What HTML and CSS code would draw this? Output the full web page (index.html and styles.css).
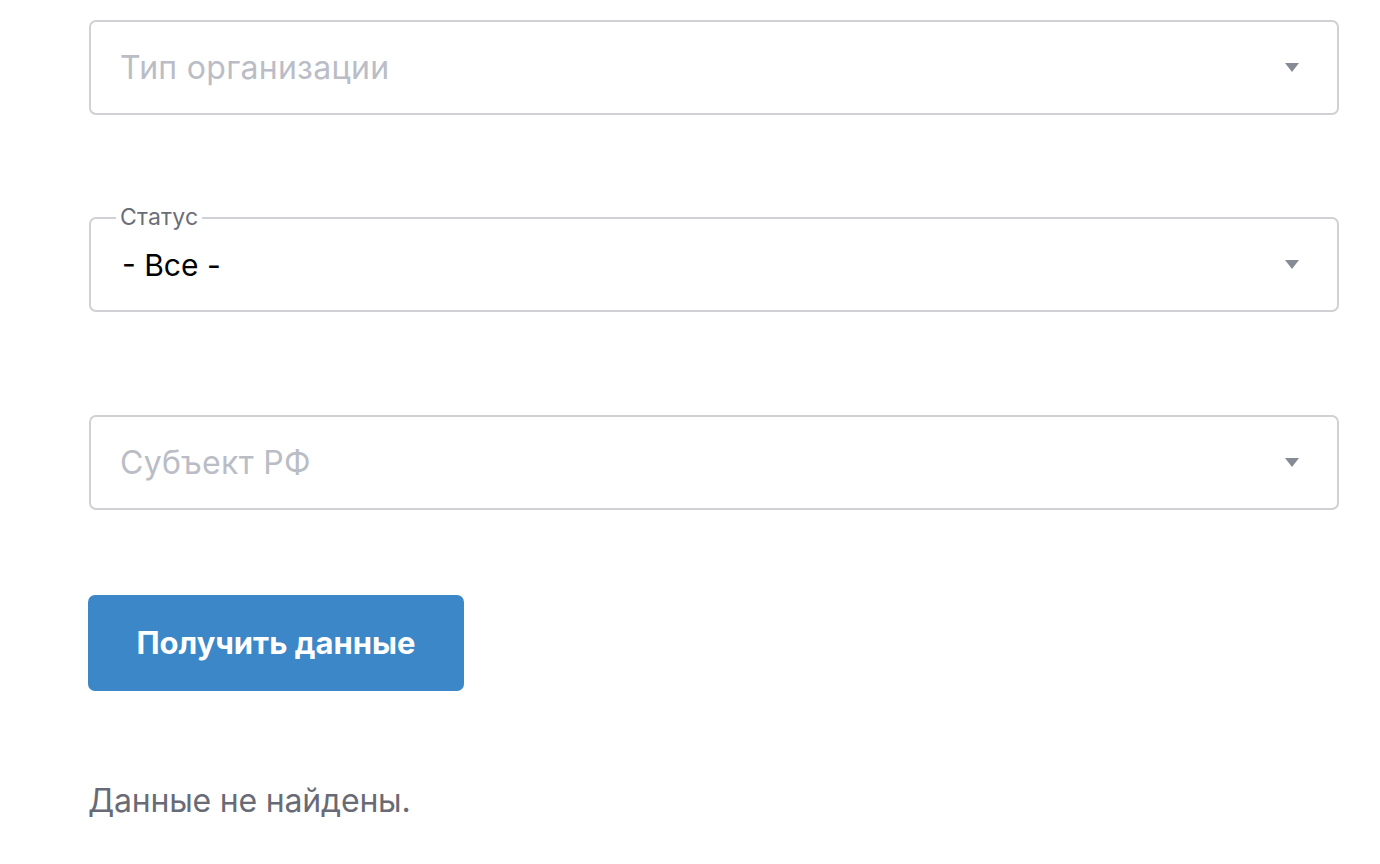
FILE: index.html
```html
<!DOCTYPE html>
<html lang="ru">
<head>
<meta charset="utf-8">
<link rel="stylesheet" href="styles.css">
</head>
<body>
<main class="form">
  <div class="field">
    <div class="select">
      <span class="placeholder">Тип организации</span>
      <span class="arrow"></span>
    </div>
  </div>
  <div class="field">
    <div class="select">
      <span class="legend">Статус</span>
      <span class="value">- Все -</span>
      <span class="arrow"></span>
    </div>
  </div>
  <div class="field">
    <div class="select">
      <span class="placeholder">Субъект РФ</span>
      <span class="arrow"></span>
    </div>
  </div>
  <button class="btn">Получить данные</button>
  <p class="empty">Данные не найдены.</p>
</main>
</body>
</html>
```
FILE: styles.css
```css
html, body {
  margin: 0;
  padding: 0;
  background: #ffffff;
  font-family: Inter, "Liberation Sans", Arial, sans-serif;
}
.form {
  padding: 20px 41px 0 89px;
  display: flex;
  flex-direction: column;
  align-items: flex-start;
}
.field {
  width: 100%;
  margin-bottom: 102.3px;
}
.select {
  box-sizing: border-box;
  width: 100%;
  height: 95px;
  border: 2px solid #d0d1d4;
  border-radius: 7px;
  display: flex;
  align-items: center;
  justify-content: space-between;
  padding: 0 38px 0 29px;
  position: relative;
}
.legend {
  position: absolute;
  top: -15px;
  left: 25px;
  padding: 0 4px 0 4px;
  background: #fff;
  font-size: 23px;
  letter-spacing: 0.2px;
  color: #6b6e78;
  line-height: 26px;
}
.placeholder {
  font-size: 32px;
  letter-spacing: 0.3px;
  color: #babdc6;
}
.value {
  font-size: 30px;
  color: #000;
  padding-left: 2px;
}
.arrow {
  width: 0;
  height: 0;
  border-left: 7px solid transparent;
  border-right: 7px solid transparent;
  border-top: 9px solid #878b95;
}
.btn {
  margin-top: -17.3px;
  width: 376px;
  height: 96px;
  border: none;
  border-radius: 7px;
  background: #3c87c7;
  color: #fff;
  font-family: Inter, "Liberation Sans", Arial, sans-serif;
  font-weight: bold;
  font-size: 31px;
  padding: 0;
  margin-left: -1px;
}
.empty {
  margin: 90px 0 0 -1px;
  font-size: 32px;
  letter-spacing: -0.2px;
  color: #686b75;
}
```
